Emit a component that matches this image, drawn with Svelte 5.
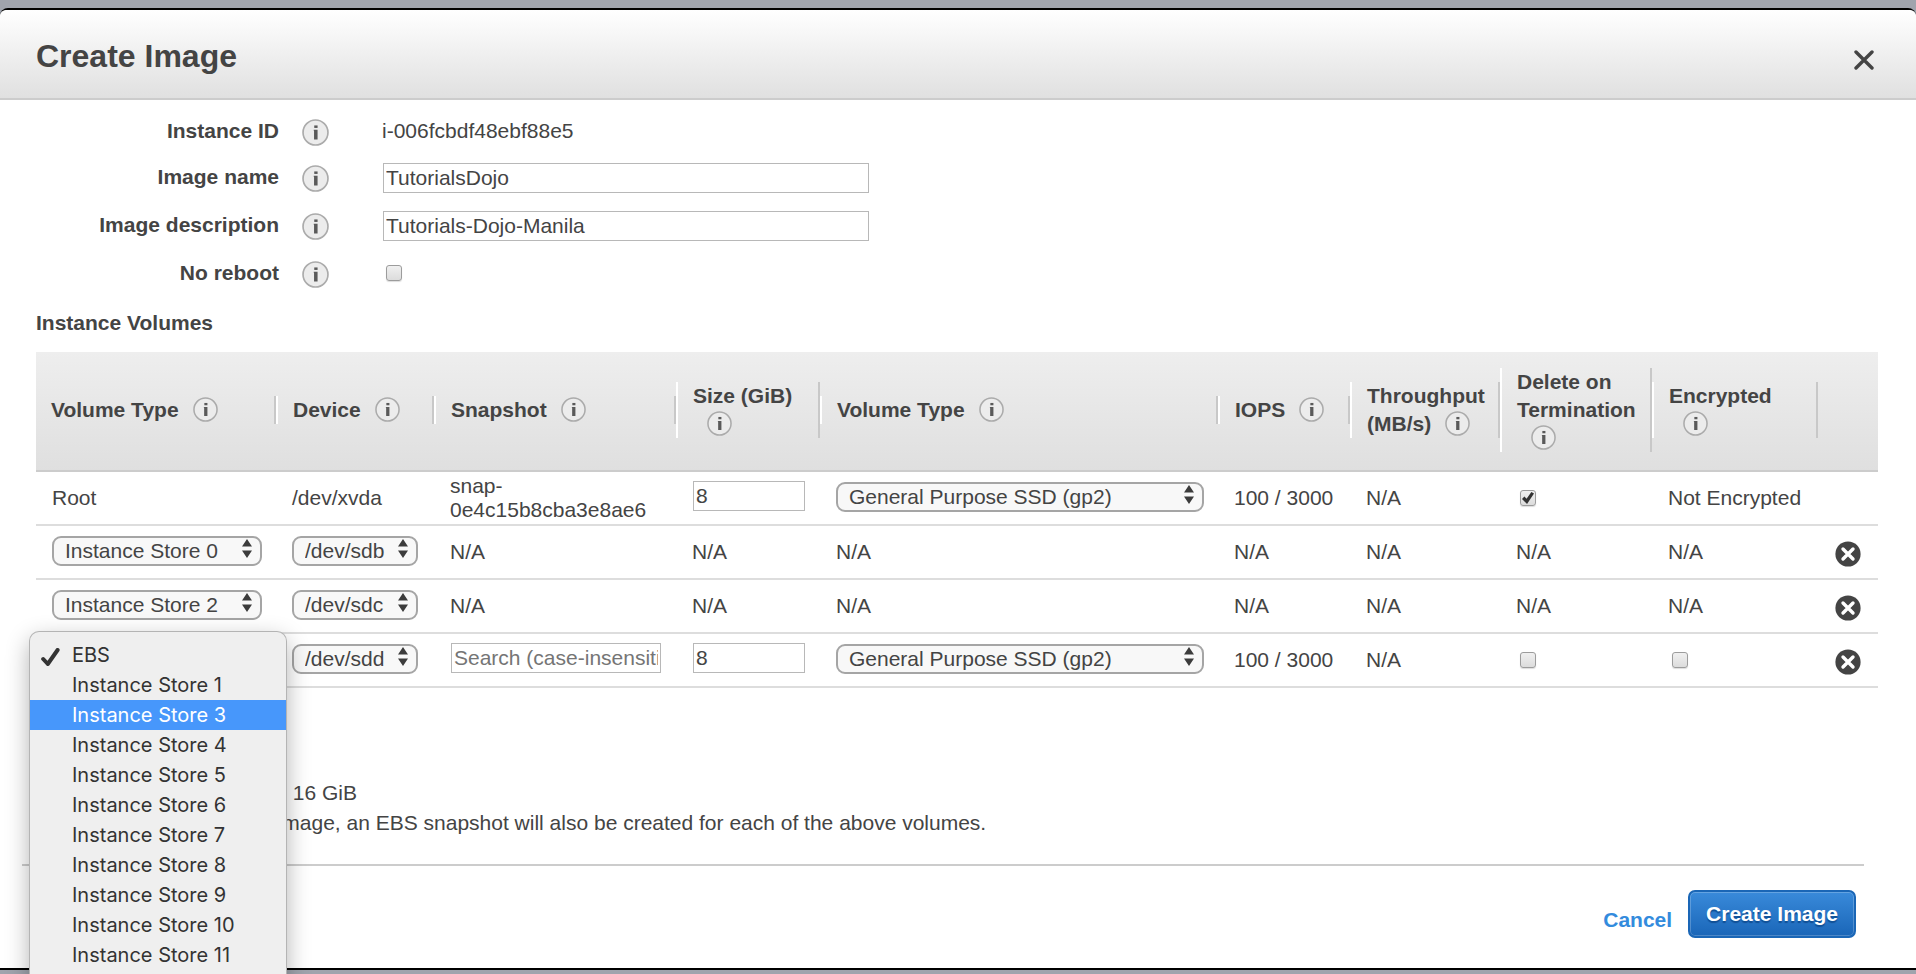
<script>
  let imageName = $state('TutorialsDojo');
  let imageDescription = $state('Tutorials-Dojo-Manila');
  let noReboot = $state(false);
  let highlighted = $state('Instance Store 3');

  const columns = [
    { label: 'Volume Type', width: 240 },
    { label: 'Device', width: 158 },
    { label: 'Snapshot', width: 242 },
    { label: 'Size (GiB)', width: 144 },
    { label: 'Volume Type', width: null },
    { label: 'IOPS', width: 132 },
    { label: 'Throughput (MB/s)', width: 150 },
    { label: 'Delete on Termination', width: 152 },
    { label: 'Encrypted', width: 166 }
  ];

  const volumes = [
    { kind: 'root', store: 'Root', device: '/dev/xvda' },
    { kind: 'store', store: 'Instance Store 0', device: '/dev/sdb' },
    { kind: 'store', store: 'Instance Store 2', device: '/dev/sdc' },
    { kind: 'ebs', store: 'EBS', device: '/dev/sdd' }
  ];

  const storeOptions = ['EBS', ...[1, 3, 4, 5, 6, 7, 8, 9, 10, 11].map((n) => `Instance Store ${n}`)];
</script>

{#snippet info(topic)}
  <button type="button" class="info" aria-label="About {topic}">
    <svg viewBox="0 0 26 26" aria-hidden="true">
      <circle cx="13" cy="13" r="12" fill="#ececec" stroke="#ababab" stroke-width="1.6" />
      <rect x="11.8" y="6.2" width="3.2" height="2.4" fill="#5a5a5a" />
      <path d="M11.3 10.4H15v9.4h-3.4v-8.6h-.3z" fill="#5a5a5a" />
    </svg>
  </button>
{/snippet}

{#snippet picker(value, label, size)}
  <span class="select {size}">
    <select aria-label={label}><option>{value}</option></select>
    <svg viewBox="0 0 10 19" aria-hidden="true">
      <path d="M5 0l5 7.5H0zM5 19l-5-7.5h10z" fill="#3c3c3c" />
    </svg>
  </span>
{/snippet}

<div class="page">
  <main class="modal">
    <header>
      <h1>Create Image</h1>
      <button type="button" class="close" aria-label="Close">
        <svg viewBox="0 0 20 20" aria-hidden="true">
          <path d="M2 2l16 16M18 2L2 18" stroke="#444" stroke-width="3.4" stroke-linecap="round" />
        </svg>
      </button>
    </header>

    <form onsubmit={(e) => e.preventDefault()}>
      <div class="fields">
        <div class="field first">
          <span class="label">Instance ID</span>
          {@render info('Instance ID')}
          <span class="value">i-006fcbdf48ebf88e5</span>
        </div>
        <div class="field">
          <label class="label" for="image-name">Image name</label>
          {@render info('Image name')}
          <input id="image-name" class="text" type="text" bind:value={imageName} />
        </div>
        <div class="field">
          <label class="label" for="image-description">Image description</label>
          {@render info('Image description')}
          <input id="image-description" class="text" type="text" bind:value={imageDescription} />
        </div>
        <div class="field">
          <label class="label" for="no-reboot">No reboot</label>
          {@render info('No reboot')}
          <input id="no-reboot" type="checkbox" bind:checked={noReboot} />
        </div>
      </div>

      <section>
        <h2>Instance Volumes</h2>
        <table>
          <colgroup>
            {#each columns as column}
              <col style:width={column.width ? `${column.width}px` : 'auto'} />
            {/each}
            <col style:width="60px" />
          </colgroup>
          <thead>
            <tr>
              {#each columns as column}
                <th scope="col"><div>{column.label}{@render info(column.label)}</div></th>
              {/each}
              <td></td>
            </tr>
          </thead>
          <tbody>
            {#each volumes as volume}
              <tr>
                {#if volume.kind === 'root'}
                  <td>{volume.store}</td>
                  <td>{volume.device}</td>
                  <td>snap-0e4c15b8cba3e8ae6</td>
                {:else}
                  <td>
                    {#if volume.kind === 'store'}
                      {@render picker(volume.store, 'Volume type', 'store')}
                    {:else}
                      <div class="anchor">
                        <ul class="menu" role="listbox" aria-label="Volume type">
                          {#each storeOptions as option}
                            <li
                              role="option"
                              aria-selected={option === volume.store}
                              class:active={option === highlighted}
                              onmouseenter={() => (highlighted = option)}
                            >
                              {#if option === volume.store}
                                <svg class="tick" viewBox="0 0 19 18" aria-hidden="true">
                                  <path
                                    d="M2.2 11l4.6 5L16.6 2"
                                    fill="none"
                                    stroke="#333"
                                    stroke-width="4"
                                    stroke-linecap="round"
                                    stroke-linejoin="round"
                                  />
                                </svg>
                              {/if}
                              {option}
                            </li>
                          {/each}
                        </ul>
                      </div>
                    {/if}
                  </td>
                  <td>{@render picker(volume.device, 'Device', 'device')}</td>
                  <td>
                    {#if volume.kind === 'ebs'}
                      <input
                        class="text search"
                        type="text"
                        aria-label="Snapshot"
                        placeholder="Search (case-insensitive)"
                      />
                    {:else}N/A{/if}
                  </td>
                {/if}

                {#if volume.kind === 'store'}
                  <td>N/A</td>
                  <td>N/A</td>
                  <td>N/A</td>
                  <td>N/A</td>
                  <td>N/A</td>
                  <td>N/A</td>
                {:else}
                  <td><input class="text size" type="text" aria-label="Size (GiB)" value="8" /></td>
                  <td>{@render picker('General Purpose SSD (gp2)', 'EBS volume type', 'ssd')}</td>
                  <td>100 / 3000</td>
                  <td>N/A</td>
                  <td>
                    <input
                      type="checkbox"
                      aria-label="Delete on Termination"
                      checked={volume.kind === 'root'}
                    />
                  </td>
                  <td>
                    {#if volume.kind === 'root'}Not Encrypted{:else}
                      <input type="checkbox" aria-label="Encrypted" />
                    {/if}
                  </td>
                {/if}

                <td>
                  {#if volume.kind !== 'root'}
                    <button type="button" class="remove" aria-label="Remove {volume.device}">
                      <svg viewBox="0 0 26 26" aria-hidden="true">
                        <circle cx="13" cy="13" r="12.6" fill="#444" />
                        <path
                          d="M8 8l10 10M18 8L8 18"
                          stroke="#fff"
                          stroke-width="3.4"
                          stroke-linecap="round"
                        />
                      </svg>
                    </button>
                  {/if}
                </td>
              </tr>
            {/each}
          </tbody>
        </table>

        <div class="notes">
          <p>Total size of EBS Volumes: 16 GiB</p>
          <p>
            When you create an EBS image, an EBS snapshot will also be created for each of the above
            volumes.
          </p>
        </div>
      </section>

      <footer>
        <a href="#cancel">Cancel</a>
        <button type="submit" class="primary">Create Image</button>
      </footer>
    </form>
  </main>
</div>

<style>
  :global(body) {
    overflow: hidden;
    background: #a0a4aa;
  }
  .page {
    padding: 8px 0 4px;
    background: #a0a4ad;
    color: #444;
    font: 21px/28px 'Liberation Sans', Arial, sans-serif;
  }
  .page * {
    box-sizing: border-box;
  }
  .modal {
    border-top: 2px solid #000;
    border-bottom: 2px solid #000;
    border-radius: 8px 8px 0 0;
    background: #fff;
  }
  header {
    display: flex;
    align-items: center;
    justify-content: space-between;
    height: 90px;
    padding: 4px 42px 0 36px;
    border-bottom: 2px solid #ccc;
    border-radius: 6px 6px 0 0;
    background: linear-gradient(#fff, #e0e0e0);
  }
  h1,
  h2,
  p {
    margin: 0;
  }
  h1 {
    font-size: 32px;
    line-height: 40px;
  }
  h2 {
    margin-bottom: 15px;
    font-size: 21px;
  }
  button {
    padding: 0;
    border: 0;
    background: none;
    font: inherit;
    cursor: pointer;
  }
  svg {
    display: block;
  }
  .close {
    width: 20px;
    height: 20px;
    margin-top: 8px;
  }

  .fields {
    padding: 9px 36px 0;
  }
  .field {
    display: flex;
    align-items: center;
    height: 48px;
  }
  .field.first {
    height: 44px;
  }
  .label {
    width: 243px;
    text-align: right;
    font-weight: bold;
  }
  .field .info {
    width: 27px;
    height: 27px;
    margin: 2px 53px 0 23px;
  }
  .info {
    display: inline-block;
    flex: none;
  }
  input {
    color: #444;
    font: inherit;
  }
  .text {
    width: 486px;
    height: 30px;
    margin: 0 0 0 1px;
    padding: 0 2px;
    border: 1px solid #b8b8b8;
    background: #fff;
  }
  .field .text {
    margin-top: 2px;
  }
  .text::placeholder {
    color: #757575;
    opacity: 1;
  }
  input[type='checkbox'] {
    display: block;
    position: relative;
    width: 16px;
    height: 16px;
    margin: 0 4px;
    border: 1px solid #9c9c9c;
    border-radius: 3px;
    background: linear-gradient(#f0f0f0, #dcdcdc);
    box-shadow: 0 1px 1px #ddd;
    appearance: none;
  }
  input[type='checkbox']:checked::after {
    content: '';
    position: absolute;
    inset: 1px;
    background: #333;
    clip-path: polygon(0 58%, 20% 38%, 38% 56%, 78% 0, 100% 12%, 42% 100%);
  }

  section {
    padding: 12px 38px 0 36px;
  }
  table {
    width: 100%;
    table-layout: fixed;
    border-collapse: separate;
    border-spacing: 0;
  }
  thead tr {
    background: linear-gradient(#eee, #dfdfdf);
  }
  thead th,
  thead td {
    padding: 16px 0 18px;
    border-bottom: 2px solid #ccc;
    text-align: left;
    vertical-align: middle;
  }
  th div {
    padding: 0 14px 0 15px;
    border-right: 2px solid #c8c8c8;
    border-left: 2px solid #fff;
  }
  th:first-child div {
    border-left: 0;
  }
  th .info {
    width: 25px;
    height: 25px;
    margin-left: 14px;
    vertical-align: -5px;
  }
  tbody td {
    height: 54px;
    padding: 2px 0 2px 16px;
    border-bottom: 2px solid #ddd;
    line-height: 24px;
    vertical-align: middle;
  }
  td .text {
    display: block;
    margin-bottom: 4px;
  }
  .size {
    width: 112px;
  }
  .search {
    width: 210px;
  }

  .anchor {
    position: relative;
    height: 32px;
  }
  .select {
    display: block;
    position: relative;
    height: 30px;
    margin-bottom: 2px;
  }
  .select.store {
    width: 210px;
  }
  .select.device {
    width: 126px;
  }
  .select.ssd {
    width: 368px;
    max-width: 100%;
  }
  .select select {
    width: 100%;
    height: 30px;
    margin: 0;
    padding: 0 20px 1px 11px;
    border: 2px solid #a5a5a5;
    border-radius: 9px;
    background: #f8f8f8;
    color: #444;
    font: inherit;
    appearance: none;
  }
  .select svg {
    position: absolute;
    top: 3px;
    right: 10px;
    width: 10px;
    height: 19px;
    pointer-events: none;
  }
  .remove {
    display: block;
    width: 26px;
    height: 26px;
    margin: 3px 0 0 1px;
  }

  .menu {
    position: absolute;
    z-index: 2;
    top: -12px;
    left: -22px;
    width: 256px;
    margin: 0;
    padding: 8px 0 24px;
    border-radius: 9px;
    background: #efefef;
    box-shadow:
      0 0 0 1px #b4b4b4,
      0 8px 24px rgb(0 0 0 / 32%);
    color: #333;
    font: 20px/30px Inter, 'Liberation Sans', sans-serif;
    list-style: none;
  }
  .menu li {
    position: relative;
    padding-left: 42px;
  }
  .menu .active {
    background: #4797fb;
    color: #fff;
  }
  .tick {
    position: absolute;
    top: 8px;
    left: 11px;
    width: 19px;
    height: 18px;
  }

  .notes {
    padding: 90px 0 26px;
    line-height: 30px;
  }
  footer {
    display: flex;
    align-items: center;
    justify-content: flex-end;
    gap: 16px;
    margin: 0 52px 0 22px;
    padding: 24px 8px 30px;
    border-top: 2px solid #ccc;
    font-weight: bold;
  }
  footer a {
    padding-top: 12px;
    color: #338bdd;
    text-decoration: none;
  }
  .primary {
    height: 48px;
    padding: 0 16px;
    border: 2px solid #1a66b6;
    border-radius: 7px;
    background: linear-gradient(#398ada, #1a66b8);
    box-shadow: inset 0 0 0 1px rgb(255 255 255 / 22%);
    color: #fff;
    text-shadow: 0 2px 1px #104f95;
  }
</style>
